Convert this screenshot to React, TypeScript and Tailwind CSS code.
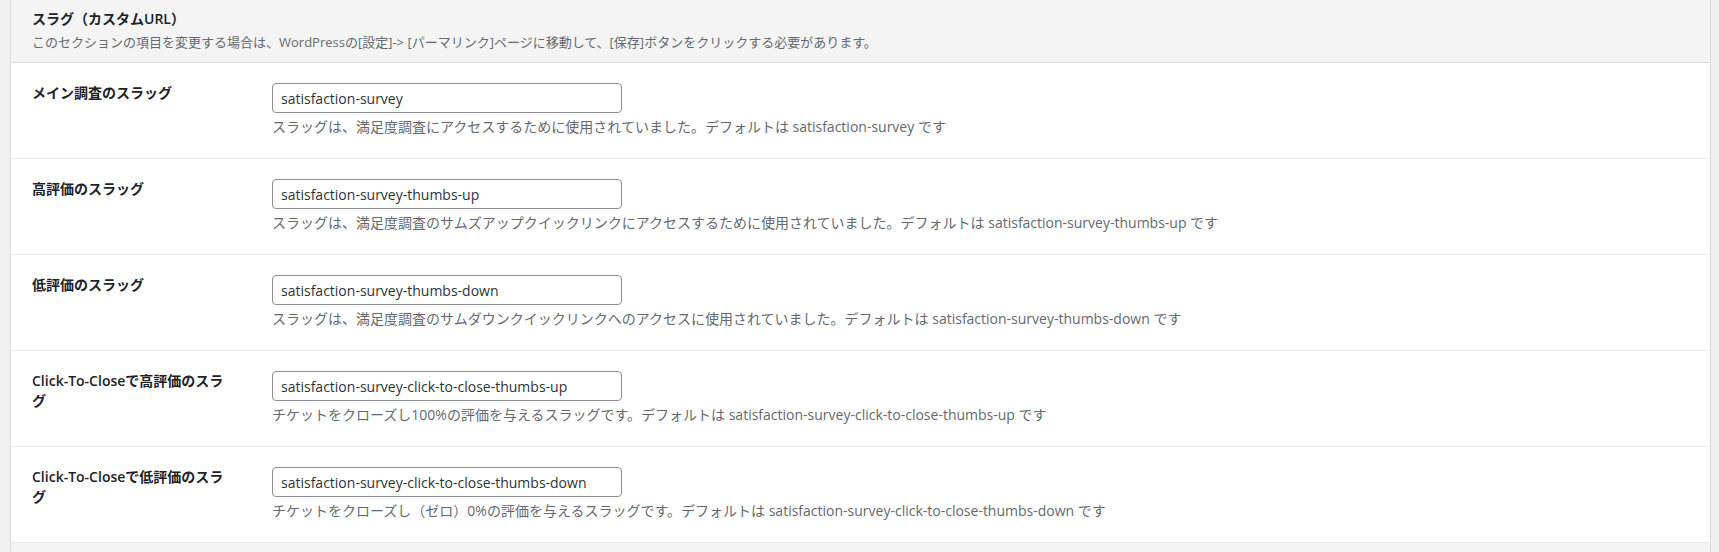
const rows = [
  {
    label: "メイン調査のスラッグ",
    value: "satisfaction-survey",
    desc: "スラッグは、満足度調査にアクセスするために使用されていました。デフォルトは satisfaction-survey です",
  },
  {
    label: "高評価のスラッグ",
    value: "satisfaction-survey-thumbs-up",
    desc: "スラッグは、満足度調査のサムズアップクイックリンクにアクセスするために使用されていました。デフォルトは satisfaction-survey-thumbs-up です",
  },
  {
    label: "低評価のスラッグ",
    value: "satisfaction-survey-thumbs-down",
    desc: "スラッグは、満足度調査のサムダウンクイックリンクへのアクセスに使用されていました。デフォルトは satisfaction-survey-thumbs-down です",
  },
  {
    label: "Click-To-Closeで高評価のスラグ",
    value: "satisfaction-survey-click-to-close-thumbs-up",
    desc: "チケットをクローズし100%の評価を与えるスラッグです。デフォルトは satisfaction-survey-click-to-close-thumbs-up です",
  },
  {
    label: "Click-To-Closeで低評価のスラグ",
    value: "satisfaction-survey-click-to-close-thumbs-down",
    desc: "チケットをクローズし（ゼロ）0%の評価を与えるスラッグです。デフォルトは satisfaction-survey-click-to-close-thumbs-down です",
  },
];

function SlugRow({ label, value, desc }: { label: string; value: string; desc: string }) {
  return (
    <div className="flex h-[96px] border-b border-[#ececec] bg-white pt-[20px] pl-[21px]">
      <div className="w-[240px] shrink-0">
        <div className="w-[192px] text-[14px] leading-[20px] font-semibold text-[#1d2327]">{label}</div>
      </div>
      <div className="flex flex-col">
        <input
          readOnly
          value={value}
          className="h-[30px] w-[350px] rounded-[4px] border border-[#8c8f94] bg-white px-[8px] text-[14px] text-[#2c3338] outline-none"
        />
        <p className="mt-[5px] text-[14px] leading-[18px] text-[#646970]">{desc}</p>
      </div>
    </div>
  );
}

export default function App() {
  return (
    <div
      className="h-[552px] w-full overflow-hidden bg-[#f0f0f0] pr-[8px] pl-[10px]"
      style={{ fontFamily: '"Open Sans", "Noto Sans CJK JP", sans-serif' }}
    >
      <div className="h-full border-x border-[#dcdcde] bg-[#f4f4f4]">
        <div className="h-[63px] border-b border-[#dcdcde] bg-[#f4f4f4] pt-[9px] pl-[21px]">
          <h2 className="text-[14px] leading-[20px] font-semibold text-[#1d2327]">スラグ（カスタムURL）</h2>
          <p className="mt-[3px] text-[13px] leading-[20px] text-[#646970]">
            このセクションの項目を変更する場合は、WordPressの[設定]-&gt; [パーマリンク]ページに移動して、[保存]ボタンをクリックする必要があります。
          </p>
        </div>
        {rows.map((r) => (
          <SlugRow key={r.value} {...r} />
        ))}
      </div>
    </div>
  );
}
